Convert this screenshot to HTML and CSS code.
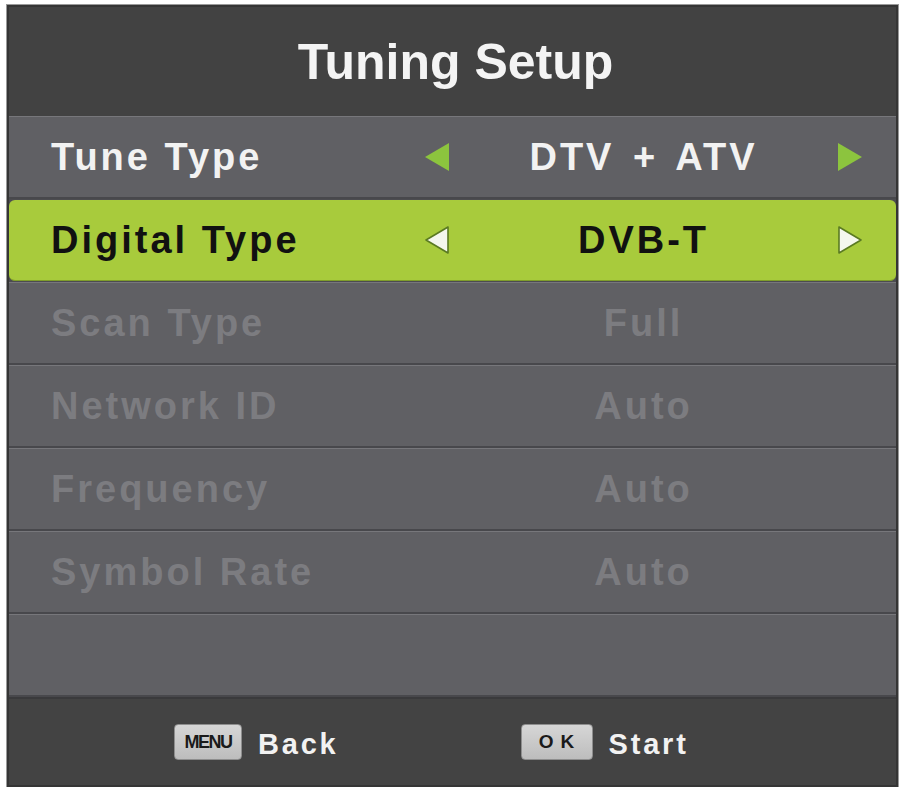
FILE: index.html
```html
<!DOCTYPE html>
<html>
<head>
<meta charset="utf-8">
<link rel="stylesheet" href="styles.css">
</head>
<body>
<div class="panel">
  <div class="header">Tuning Setup</div>
  <div class="list">
    <div class="row">
      <span class="label">Tune Type</span>
      <svg class="arrow" viewBox="0 0 28 30"><polygon points="26,1 26,29 2,15" fill="#8cc43e"/></svg>
      <span class="value">DTV + ATV</span>
      <svg class="arrow" viewBox="0 0 28 30"><polygon points="2,1 2,29 26,15" fill="#8cc43e"/></svg>
    </div>
    <div class="row active">
      <span class="label">Digital Type</span>
      <svg class="arrow" viewBox="0 0 28 30"><polygon points="25,2 25,28 3,15" fill="#f4f7ee" stroke="#5a7a22" stroke-width="1.6" stroke-linejoin="round"/></svg>
      <span class="value">DVB-T</span>
      <svg class="arrow" viewBox="0 0 28 30"><polygon points="3,2 3,28 25,15" fill="#f4f7ee" stroke="#5a7a22" stroke-width="1.6" stroke-linejoin="round"/></svg>
    </div>
    <div class="row disabled">
      <span class="label">Scan Type</span>
      <span class="arrow"></span>
      <span class="value">Full</span>
      <span class="arrow"></span>
    </div>
    <div class="row disabled">
      <span class="label">Network ID</span>
      <span class="arrow"></span>
      <span class="value">Auto</span>
      <span class="arrow"></span>
    </div>
    <div class="row disabled">
      <span class="label">Frequency</span>
      <span class="arrow"></span>
      <span class="value">Auto</span>
      <span class="arrow"></span>
    </div>
    <div class="row disabled">
      <span class="label">Symbol Rate</span>
      <span class="arrow"></span>
      <span class="value">Auto</span>
      <span class="arrow"></span>
    </div>
    <div class="row empty"></div>
  </div>
  <div class="footer">
    <div class="hint"><span class="key key-menu">MENU</span><span class="hint-text">Back</span></div>
    <div class="hint"><span class="key key-ok">OK</span><span class="hint-text">Start</span></div>
  </div>
</div>
</body>
</html>
```
FILE: styles.css
```css
html, body {
  margin: 0;
  padding: 0;
  background: #ffffff;
}
body {
  font-family: "Liberation Sans", Arial, sans-serif;
  padding: 5px 0 0 7px;
}
.panel {
  width: 887px;
  border: 2px solid #353535;
  background: #424242;
  box-shadow: 0 0 0 1px #9a9a9a;
}
.header {
  height: 109px;
  display: flex;
  align-items: center;
  justify-content: center;
  color: #f4f4f4;
  font-weight: bold;
  font-size: 50px;
  padding-left: 6px;
}
.list {
  background: #4c4c50;
}
.row {
  box-sizing: border-box;
  height: 83px;
  background: #606064;
  border-top: 1px solid #77777b;
  border-bottom: 2px solid #48484c;
  display: grid;
  grid-template-columns: 1fr 28px 385px 28px;
  align-items: center;
  padding: 0 32px 0 42px;
  font-weight: bold;
  font-size: 38px;
  letter-spacing: 3px;
  color: #f2f2f2;
}
.row .value {
  text-align: center;
  word-spacing: 5px;
}
.arrow {
  width: 28px;
  height: 30px;
  display: block;
}
.row.active {
  background: #a8cb3c;
  border: none;
  border-bottom: 1px solid #7f9d2a;
  border-radius: 6px;
  height: 81px;
  margin: 1px 0 1px 0;
  color: #111111;
}
.row.disabled {
  color: #7c7c80;
}
.footer {
  height: 88px;
  box-sizing: border-box;
  border-top: 2px solid #3a3a3c;
  background: #434343;
  display: flex;
  align-items: center;
  padding-left: 165px;
  gap: 182px;
}
.hint {
  display: flex;
  align-items: center;
  gap: 16px;
}
.hint-text {
  color: #f2f2f2;
  font-weight: bold;
  font-size: 29px;
  letter-spacing: 2.8px;
  position: relative;
  top: 2px;
}
.key {
  display: flex;
  align-items: center;
  justify-content: center;
  height: 36px;
  border-radius: 4px;
  background: linear-gradient(#d6d6d6, #bdbdbd);
  border: 1px solid #8e8e8e;
  color: #1a1a1a;
  font-weight: bold;
  box-sizing: border-box;
}
.key-menu {
  width: 68px;
  font-size: 18px;
  letter-spacing: -1.5px;
}
.key-ok {
  width: 72px;
  font-size: 19px;
  letter-spacing: 7px;
  padding-left: 7px;
}
```
